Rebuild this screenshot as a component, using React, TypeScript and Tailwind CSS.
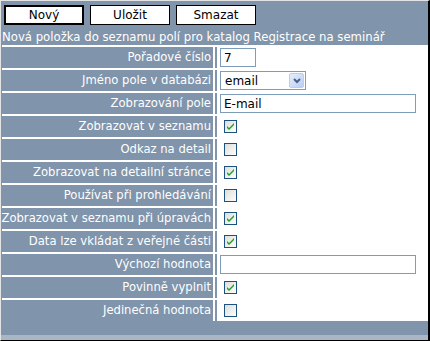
import React from "react";

const font = { fontFamily: "'DejaVu Sans', Verdana, sans-serif" };

function Check({ checked }: { checked: boolean }) {
  return (
    <svg width="13" height="13" viewBox="0 0 13 13" className="block">
      <defs>
        <linearGradient id="cbg" x1="0" y1="0" x2="1" y2="1">
          <stop offset="0" stopColor="#dcdcd7" />
          <stop offset="1" stopColor="#ffffff" />
        </linearGradient>
      </defs>
      <rect x="0.5" y="0.5" width="12" height="12" fill="url(#cbg)" stroke="#1c5180" />
      {checked && (
        <path d="M3 6 L5 8 L10 3 L10 5 L5 10 L3 8 Z" fill="#21a121" />
      )}
    </svg>
  );
}

type Row = { label: string; kind: "num" | "select" | "text" | "check"; value?: string; checked?: boolean };

const rows: Row[] = [
  { label: "Pořadové číslo", kind: "num", value: "7" },
  { label: "Jméno pole v databázi", kind: "select", value: "email" },
  { label: "Zobrazování pole", kind: "text", value: "E-mail" },
  { label: "Zobrazovat v seznamu", kind: "check", checked: true },
  { label: "Odkaz na detail", kind: "check", checked: false },
  { label: "Zobrazovat na detailní stránce", kind: "check", checked: true },
  { label: "Používat při prohledávání", kind: "check", checked: false },
  { label: "Zobrazovat v seznamu při úpravách", kind: "check", checked: true },
  { label: "Data lze vkládat z veřejné části", kind: "check", checked: true },
  { label: "Výchozí hodnota", kind: "text", value: "" },
  { label: "Povinně vyplnit", kind: "check", checked: true },
  { label: "Jedinečná hodnota", kind: "check", checked: false },
];

function Value({ r }: { r: Row }) {
  if (r.kind === "num")
    return (
      <div className="ml-[3px] w-[36px] h-[19px] border border-[#7f9db9] bg-white flex items-center px-[3px] text-[12px] text-black">
        {r.value}
      </div>
    );
  if (r.kind === "select")
    return (
      <div className="ml-[3px] w-[86px] h-[19px] border border-[#7f9db9] bg-white flex items-center text-[12px] text-black">
        <span className="flex-1 pl-[4px]">{r.value}</span>
        <div className="w-[15px] h-[15px] mr-[1px] rounded-[2px] bg-gradient-to-br from-[#e6eefc] to-[#b9cdf5] border border-[#b9cdf5] flex items-center justify-center">
          <svg width="8" height="6" viewBox="0 0 8 6">
            <path d="M1 1 L4 4 L7 1" stroke="#4d6185" strokeWidth="2" fill="none" />
          </svg>
        </div>
      </div>
    );
  if (r.kind === "text")
    return (
      <div className="ml-[3px] w-[196px] h-[19px] border border-[#7f9db9] bg-white flex items-center px-[3px] text-[12px] text-black">
        {r.value}
      </div>
    );
  return (
    <div className="ml-[7px]">
      <Check checked={!!r.checked} />
    </div>
  );
}

export default function App() {
  return (
    <div
      className="w-[430px] h-[341px] bg-[#8094ab] border-t border-l border-t-[#e4e4e4] border-l-[#e4e4e4] border-r-2 border-b border-r-black border-b-black flex flex-col"
      style={font}
    >
      <div className="flex gap-[6px] pl-[3px] pt-[4px]">
        <button className="w-[80px] h-[20px] bg-white border-2 border-black text-[12px] text-black leading-none">Nový</button>
        <button className="w-[80px] h-[20px] bg-white border border-black text-[12px] text-black leading-none">Uložit</button>
        <button className="w-[80px] h-[20px] bg-white border border-black text-[12px] text-black leading-none">Smazat</button>
      </div>
      <div className="text-white text-[11.7px] pl-[1px] pt-[5px] leading-[14px] whitespace-nowrap">
        Nová položka do seznamu polí pro katalog Registrace na seminář
      </div>
      <div className="mt-[1px] ml-[1px] bg-white flex flex-col gap-[2px] pt-[2px]">
        {rows.map((r) => (
          <div key={r.label} className="flex h-[21px]">
            <div className="w-[211px] bg-[#8094ab] text-white text-[11.6px] flex items-center justify-end pr-[2px] whitespace-nowrap">
              {r.label}
            </div>
            <div className="w-[2px] bg-[#8094ab] ml-[2px]" />
            <div className="flex-1 bg-white flex items-center">
              <Value r={r} />
            </div>
          </div>
        ))}
      </div>
      <div className="flex-1 bg-[#8094ab] mt-[2px]" />
      <div className="h-[5px] bg-[#a9b6c6]" />
    </div>
  );
}
